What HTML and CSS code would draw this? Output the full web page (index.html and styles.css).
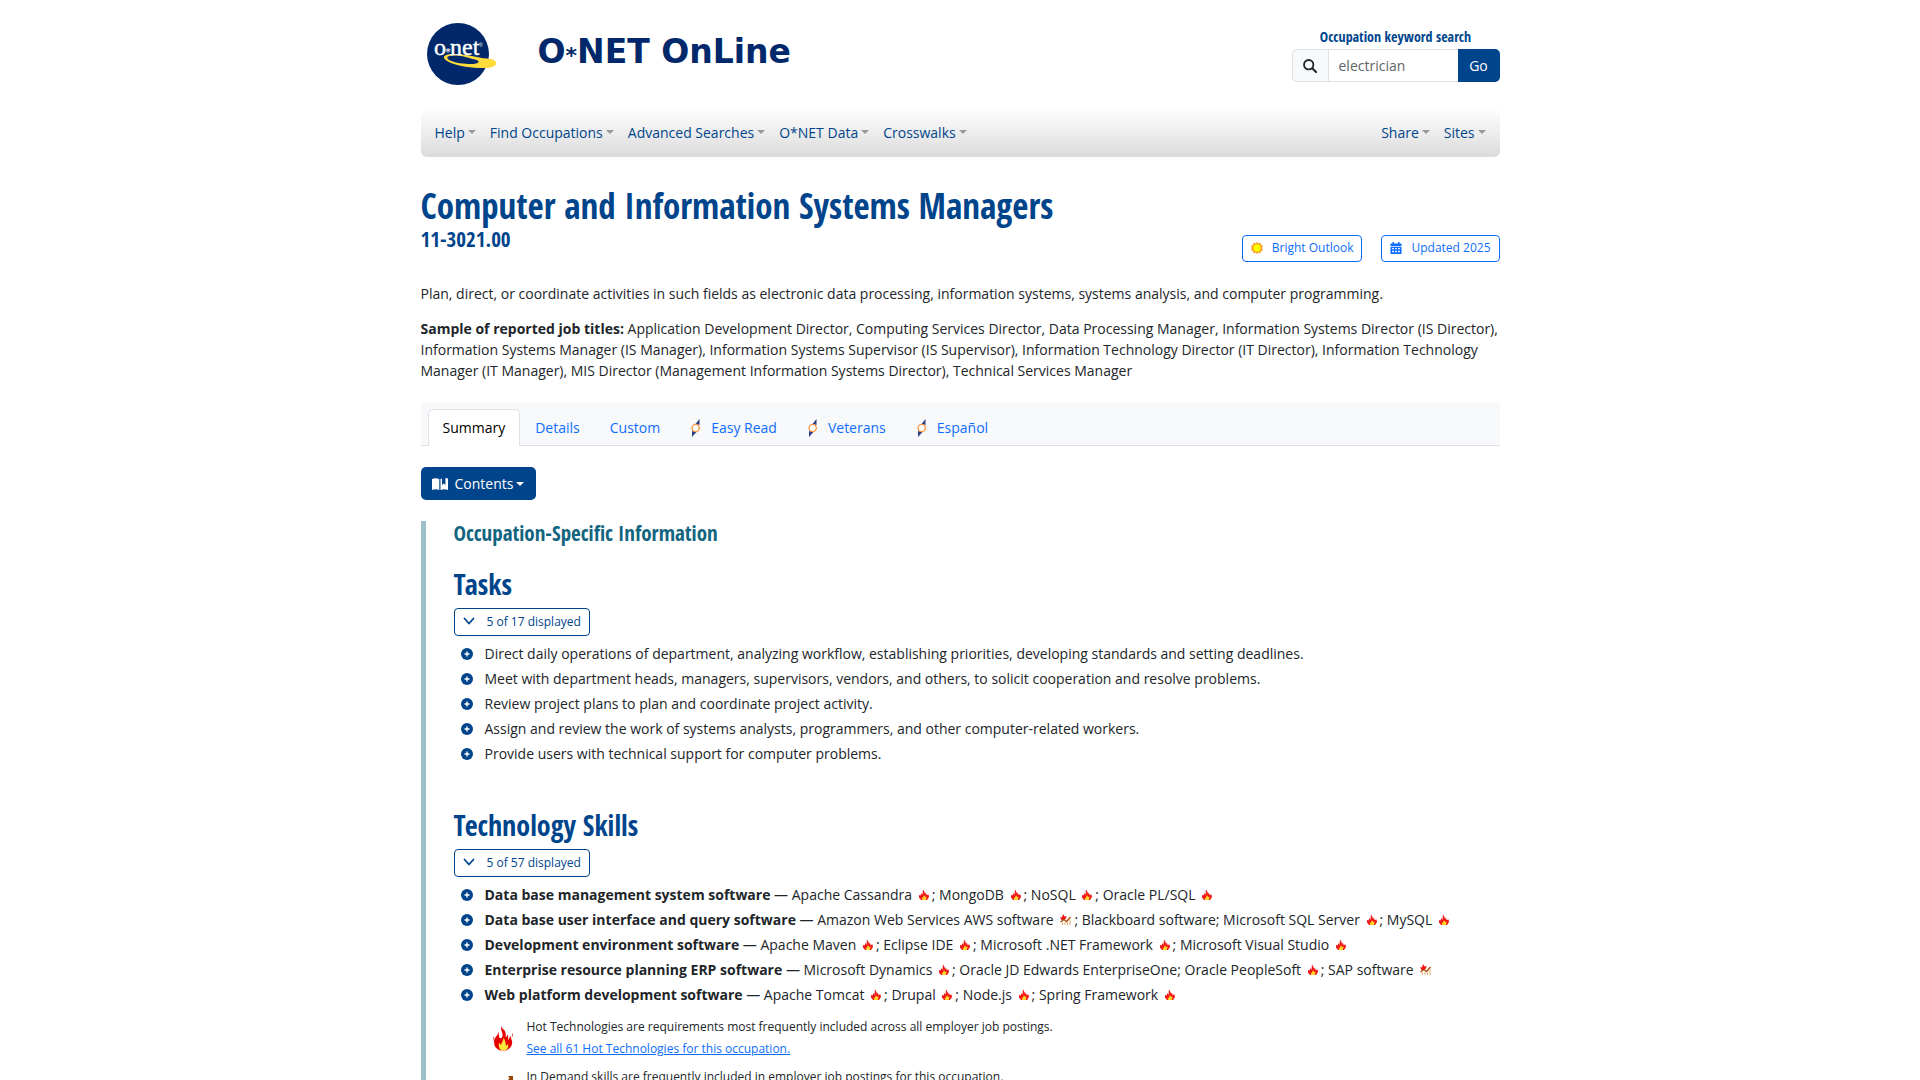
FILE: index.html
```html
<!DOCTYPE html>
<html lang="en">
<head>
<meta charset="utf-8">
<meta name="viewport" content="width=device-width, initial-scale=1">
<title>11-3021.00 - Computer and Information Systems Managers</title>
<link rel="stylesheet" href="styles.css">
</head>
<body>
<svg class="sprite" aria-hidden="true">
  <symbol id="flame" viewBox="0 0 20 25">
    <path fill="#e60000" d="M8.500 0C7 4 10 6 9.500 10C9.200 12.500 6.500 13 6 10.500C5.600 8.500 6.200 7 5.500 6C5.500 9 1 11 1 16C1 20 3 23 7 24.500H13C17 23 20 19 19 15C18.700 13 17.500 12.500 18.300 10C16.500 11 16 12.500 15.500 14C14.500 12 16 10 14.500 8.500C14 10 13.500 11 12.700 11.500C13 8 12.500 5 10.500 3.500C9.500 2.500 8.500 1.500 8.500 0ZM0 10C1 11.500 .5 13 .2 15C-.3 13 0 11.500 0 10ZM19.200 7C20 8.500 19.800 10 19.200 11C18.700 9.500 19 8.500 19.200 7Z"/>
    <path fill="#ffe83d" d="M10.500 12C10.500 15 8 17 8 19C7 18 6.500 17.500 6 16.500C5.500 19 5.500 22 8 24.500H12.500C15.500 22.500 15.500 19.500 15 17.500C14.300 19 13.500 19.500 13 20C12.500 17 12.500 14 10.500 12Z"/>
  </symbol>
  <symbol id="hot" viewBox="0 0 10 11">
    <path fill="#f01414" d="M4 0C4 1.500 6 2.500 6 5L7 3.500L7.500 6L9.500 5.500L10 8L8 11H2L0 8.500L0 6L1.500 6.500L2.500 4L3.500 6Z"/>
    <path fill="#ffd528" d="M5 6L6.200 8L7.700 7.500L6.800 11H3.200L2.600 8.500L3.800 9Z"/>
  </symbol>
  <symbol id="demand" viewBox="0 0 11 11">
    <path fill="#f01414" d="M3 0L4.500 2.500L6.500 2L6 4.500L4 6H1.500L0 3L2 3.500Z"/>
    <path fill="none" stroke="#a84b0c" stroke-width="1.300" d="M.5 8L4 5.500L6.500 7.500L10.500 3"/>
    <path fill="none" stroke="#e8a266" stroke-width="1" d="M2.500 8.500V11M5 8V11M7.500 8.500V11M10 5.500V11"/>
  </symbol>
  <symbol id="plus" viewBox="0 0 12 12">
    <circle cx="6" cy="6" r="6" fill="#00458c"/>
    <path stroke="#fff" stroke-width="1.400" d="M6 3.500V8.500M3.500 6H8.500"/>
  </symbol>
  <symbol id="needle" viewBox="0 0 10 18">
    <path fill="#2d3d82" d="M8.500 0V6L4.500 5ZM1 18V12L5.500 13Z"/>
    <circle cx="4.700" cy="9" r="3.600" fill="#fff" stroke="#f79646" stroke-width="1.400"/>
  </symbol>
  <symbol id="chevron" viewBox="0 0 12 12">
    <path fill="none" stroke="#00458c" stroke-width="1.800" stroke-linecap="round" stroke-linejoin="round" d="M1.500 3.500L6 8.500L10.500 3.500"/>
  </symbol>
</svg>

<div class="container">
  <header class="masthead">
    <a class="brand" href="#" aria-label="O*NET OnLine home">
      <svg class="brand-mark" viewBox="0 0 70 62" aria-hidden="true">
        <circle cx="31" cy="31" r="31" fill="#00286a"/>
        <path fill="#ffdc3c" fill-rule="evenodd" d="M27 31C14 31 14 36 24 40C33 44 54 46 64 44.500C72 42 71 36 60 35.500C50 35 40 31 27 31ZM28 32.500C36 32.500 41 35 48 36.500C54 38 52 41 45 41C37 41 28 40 23 37.500C18 34.500 20 32.500 28 32.500Z"/>
        <text x="7" y="32" class="brand-script">o</text>
        <text x="18" y="33" class="brand-star">*</text>
        <text x="23" y="32" class="brand-script">net</text>
        <text x="52" y="24" class="brand-reg">®</text>
      </svg>
      <span class="brand-name">O<span class="brand-asterisk">*</span>NET OnLine</span>
    </a>
    <form class="search">
      <label for="keyword">Occupation keyword search</label>
      <div class="search-group">
        <span class="search-icon"><svg width="14" height="14" viewBox="0 0 14 14" aria-hidden="true"><circle cx="5.700" cy="5.700" r="4.700" fill="none" stroke="#212529" stroke-width="1.800"/><path stroke="#212529" stroke-width="2" stroke-linecap="round" d="M9.300 9.300L13 13"/></svg></span>
        <input id="keyword" type="text" placeholder="electrician">
        <button type="submit">Go</button>
      </div>
    </form>
  </header>

  <nav class="menu" aria-label="Main">
    <button type="button">Help</button>
    <button type="button">Find Occupations</button>
    <button type="button">Advanced Searches</button>
    <button type="button">O*NET Data</button>
    <button type="button">Crosswalks</button>
    <button type="button" class="menu-right">Share</button>
    <button type="button">Sites</button>
  </nav>

  <main>
    <div class="title-row">
      <h1>Computer and Information Systems Managers<span class="code">11-3021.00</span></h1>
      <div class="badges">
        <a href="#" class="badge"><svg width="12" height="12" viewBox="0 0 12 12" aria-hidden="true"><path fill="#f79a1e" d="M6 0L7.300 1.500L9.500.8L10 3L12 4L11 6L12 8L10 9L9.500 11.300L7.300 10.500L6 12L4.700 10.500L2.500 11.300L2 9L0 8L1 6L0 4L2 3L2.500.8L4.700 1.500Z"/><circle cx="6" cy="6" r="3.700" fill="#ffff00"/></svg>Bright Outlook</a>
        <a href="#" class="badge"><svg width="12" height="12" viewBox="0 0 12 12" aria-hidden="true"><path fill="#0d6efd" fill-rule="evenodd" d="M2.500 0H4V1.500H8V0H9.500V1.500H11.500V4H.5V1.500H2.500ZM.5 4.700H11.500V12H.5ZM2.200 6V7.300H4V6ZM5.200 6V7.300H6.900V6ZM8.100 6V7.300H9.900V6ZM2.200 8.800V10.200H4V8.800ZM5.200 8.800V10.200H6.900V8.800ZM8.100 8.800V10.200H9.900V8.800Z"/></svg>Updated 2025</a>
      </div>
    </div>

    <p>Plan, direct, or coordinate activities in such fields as electronic data processing, information systems, systems analysis, and computer programming.</p>
    <p><b>Sample of reported job titles:</b> Application Development Director, Computing Services Director, Data Processing Manager, Information Systems Director (IS Director), Information Systems Manager (IS Manager), Information Systems Supervisor (IS Supervisor), Information Technology Director (IT Director), Information Technology Manager (IT Manager), MIS Director (Management Information Systems Director), Technical Services Manager</p>

    <nav class="tabs" aria-label="Report views">
      <a href="#" class="active" aria-current="page">Summary</a>
      <a href="#">Details</a>
      <a href="#">Custom</a>
      <a href="#"><svg><use href="#needle"/></svg>Easy Read</a>
      <a href="#"><svg><use href="#needle"/></svg>Veterans</a>
      <a href="#"><svg><use href="#needle"/></svg>Español</a>
    </nav>

    <button type="button" class="contents"><svg width="16" height="12" viewBox="0 0 16 12" aria-hidden="true"><path fill="#fff" d="M0 1Q3.500-.5 7.300 1V12Q3.500 10.500 0 12ZM8.500 1L10 .4V7L11.700 5.500L13.400 7V0L16 .6V12Q12.500 10.500 8.500 12Z"/></svg>Contents</button>

    <section class="report">
      <h3>Occupation-Specific Information</h3>

      <section class="topic">
        <h2>Tasks</h2>
        <button type="button" class="toggle"><svg><use href="#chevron"/></svg>5 of 17 displayed</button>
        <ul>
          <li><svg><use href="#plus"/></svg><div>Direct daily operations of department, analyzing workflow, establishing priorities, developing standards and setting deadlines.</div></li>
          <li><svg><use href="#plus"/></svg><div>Meet with department heads, managers, supervisors, vendors, and others, to solicit cooperation and resolve problems.</div></li>
          <li><svg><use href="#plus"/></svg><div>Review project plans to plan and coordinate project activity.</div></li>
          <li><svg><use href="#plus"/></svg><div>Assign and review the work of systems analysts, programmers, and other computer-related workers.</div></li>
          <li><svg><use href="#plus"/></svg><div>Provide users with technical support for computer problems.</div></li>
        </ul>
      </section>

      <section class="topic">
        <h2>Technology Skills</h2>
        <button type="button" class="toggle"><svg><use href="#chevron"/></svg>5 of 57 displayed</button>
        <ul>
          <li><svg><use href="#plus"/></svg><div><b>Data base management system software</b> — Apache Cassandra <svg class="hot"><use href="#hot"/></svg>; MongoDB <svg class="hot"><use href="#hot"/></svg>; NoSQL <svg class="hot"><use href="#hot"/></svg>; Oracle PL/SQL <svg class="hot"><use href="#hot"/></svg></div></li>
          <li><svg><use href="#plus"/></svg><div><b>Data base user interface and query software</b> — Amazon Web Services AWS software <svg class="hot demand"><use href="#demand"/></svg>; Blackboard software; Microsoft SQL Server <svg class="hot"><use href="#hot"/></svg>; MySQL <svg class="hot"><use href="#hot"/></svg></div></li>
          <li><svg><use href="#plus"/></svg><div><b>Development environment software</b> — Apache Maven <svg class="hot"><use href="#hot"/></svg>; Eclipse IDE <svg class="hot"><use href="#hot"/></svg>; Microsoft .NET Framework <svg class="hot"><use href="#hot"/></svg>; Microsoft Visual Studio <svg class="hot"><use href="#hot"/></svg></div></li>
          <li><svg><use href="#plus"/></svg><div><b>Enterprise resource planning ERP software</b> — Microsoft Dynamics <svg class="hot"><use href="#hot"/></svg>; Oracle JD Edwards EnterpriseOne; Oracle PeopleSoft <svg class="hot"><use href="#hot"/></svg>; SAP software <svg class="hot demand"><use href="#demand"/></svg></div></li>
          <li><svg><use href="#plus"/></svg><div><b>Web platform development software</b> — Apache Tomcat <svg class="hot"><use href="#hot"/></svg>; Drupal <svg class="hot"><use href="#hot"/></svg>; Node.js <svg class="hot"><use href="#hot"/></svg>; Spring Framework <svg class="hot"><use href="#hot"/></svg></div></li>
        </ul>
        <div class="notes">
          <div class="note">
            <svg width="20" height="25" aria-hidden="true"><use href="#flame"/></svg>
            <div>Hot Technologies are requirements most frequently included across all employer job postings.<br><a href="#">See all 61 Hot Technologies for this occupation.</a></div>
          </div>
          <div class="note">
            <svg width="20" height="25" viewBox="0 0 20 25" aria-hidden="true"><path fill="#994400" d="M15 0H20V6L18 4L11 13L7 9L1 16L0 14L7 6L11 10L16.500 2Z"/><path fill="#d98a4b" d="M1 18H4V25H1ZM6 13H9V25H6ZM11 16H14V25H11ZM16 10H19V25H16Z"/></svg>
            <div>In Demand skills are frequently included in employer job postings for this occupation.</div>
          </div>
        </div>
      </section>
    </section>
  </main>
</div>
</body>
</html>
```
FILE: styles.css
```css
* { box-sizing: border-box; }

html { overflow: hidden; height: 100%; }

body {
  margin: 0;
  height: 100%;
  overflow: hidden;
  background: #fff;
  color: #212529;
  font: 14px/21px "Open Sans", sans-serif;
}

.sprite { display: none; }

a { color: #0d6efd; }

button, input { font: inherit; }

h1, h2, h3, .search label {
  margin: 0;
  color: #00458c;
  font-family: "Open Sans Condensed", "Roboto Condensed", sans-serif;
  font-weight: 700;
}

p { margin: 0 0 14px; }

.container {
  max-width: 1079px;
  margin: 0 auto;
}

/* Masthead */
.masthead {
  display: flex;
  justify-content: space-between;
  align-items: flex-start;
  height: 108px;
  padding-top: 23px;
}

.brand {
  display: flex;
  gap: 41px;
  padding-left: 6px;
  text-decoration: none;
}

.brand-mark { width: 70px; height: 62px; }

.brand-script {
  fill: #fff;
  stroke: #fff;
  stroke-width: .4px;
  font: 24px "Liberation Serif", serif;
}

.brand-star { fill: #fff; font: 12px "Liberation Serif", serif; }

.brand-reg { fill: #fff; font: 5px "Liberation Sans", sans-serif; }

.brand-name {
  color: #00286a;
  font: 700 33px/58px "DejaVu Sans", sans-serif;
}

.brand-asterisk { font-size: 22px; }

.search { text-align: center; padding-top: 4px; }

.search label { display: block; line-height: 20px; margin-bottom: 2px; }

.search-group { display: flex; width: 208px; height: 33px; }

.search-icon {
  display: flex;
  align-items: center;
  justify-content: center;
  width: 36px;
  background: #f8f9fa;
  border: 1px solid #dee2e6;
  border-right: 0;
  border-radius: 5px 0 0 5px;
}

.search-group input {
  flex: 1;
  min-width: 0;
  padding: 0 10px;
  border: 1px solid #dee2e6;
  border-right: 0;
}

.search-group input::placeholder { color: #5f6468; }

.search-group button {
  width: 42px;
  padding: 0;
  border: 0;
  border-radius: 0 5px 5px 0;
  background: #00458c;
  color: #fff;
}

/* Main menu */
.menu {
  display: flex;
  align-items: center;
  height: 49px;
  padding: 0 7px;
  border-radius: 0 0 6px 6px;
  background: linear-gradient(#fff, #dbdbdb);
}

.menu button {
  padding: 5px 7px;
  border: 0;
  background: none;
  color: #00458c;
}

.menu .menu-right { margin-left: auto; }

.menu button::after, .contents::after {
  content: "";
  display: inline-block;
  margin-left: 3px;
  vertical-align: 4px;
  border: 4px solid transparent;
  border-top-color: #999;
  border-bottom: 0;
}

/* Title */
.title-row {
  display: flex;
  justify-content: space-between;
  align-items: flex-end;
  margin: 28px 0 21px;
}

h1 { font-size: 35px; line-height: 42px; }

.code { display: block; font-size: 21px; line-height: 25px; padding-bottom: 10px; }

.badges { display: flex; gap: 19px; }

.badge {
  display: flex;
  align-items: center;
  gap: 9px;
  height: 27px;
  padding: 0 8px 2px;
  border: 1px solid #0d6efd;
  border-radius: 4px;
  font-size: 12px;
  text-decoration: none;
}

/* Report tabs */
.tabs {
  display: flex;
  margin: 21px 0;
  padding: 7px 7px 0;
  border-bottom: 1px solid #dee2e6;
  background: #f8f9fa;
}

.tabs a {
  display: flex;
  align-items: center;
  height: 36px;
  padding: 0 14px;
  border: 1px solid transparent;
  border-bottom: 0;
  text-decoration: none;
}

.tabs .active {
  margin-bottom: -1px;
  height: 37px;
  padding-bottom: 1px;
  border-color: #dee2e6;
  border-radius: 5px 5px 0 0;
  background: #fff;
  color: #000;
}

.tabs svg { width: 10px; height: 18px; margin: 0 10px 0 1px; }

.contents {
  display: flex;
  align-items: center;
  height: 33px;
  padding: 0 12px 0 11px;
  border: 0;
  border-radius: 5px;
  background: #00458c;
  color: #fff;
}

.contents svg { margin-right: 7px; }

.contents::after { border-top-color: #fff; }

/* Report body */
.report {
  margin-top: 21px;
  padding-left: 28px;
  border-left: 5px solid #9dc1cb;
}

h3 { color: #12657f; font-size: 21px; line-height: 25px; }

.topic { margin: 21px 0 44px; }

h2 { font-size: 28px; line-height: 34px; }

.toggle {
  display: flex;
  align-items: center;
  height: 28px;
  margin-top: 7px;
  padding: 0 8px 2px;
  border: 1px solid #00458c;
  border-radius: 4px;
  background: #fff;
  color: #00458c;
  font-size: 12px;
}

.toggle svg { width: 12px; height: 12px; margin-right: 12px; }

ul { margin: 7px 0 0; padding: 0 0 0 7px; list-style: none; }

li { display: flex; align-items: center; gap: 12px; margin-bottom: 4px; }

li > svg { flex: none; width: 12px; height: 12px; }

.hot { width: 10px; height: 11px; margin: 0 3px; }

.demand { width: 11px; }

.notes {
  display: grid;
  gap: 6px;
  margin: 11px 0 0 39px;
  font-size: 12px;
  line-height: 22px;
}

.note {
  display: flex;
  gap: 14px;
  min-height: 44px;
}

.note svg { align-self: center; }
```
